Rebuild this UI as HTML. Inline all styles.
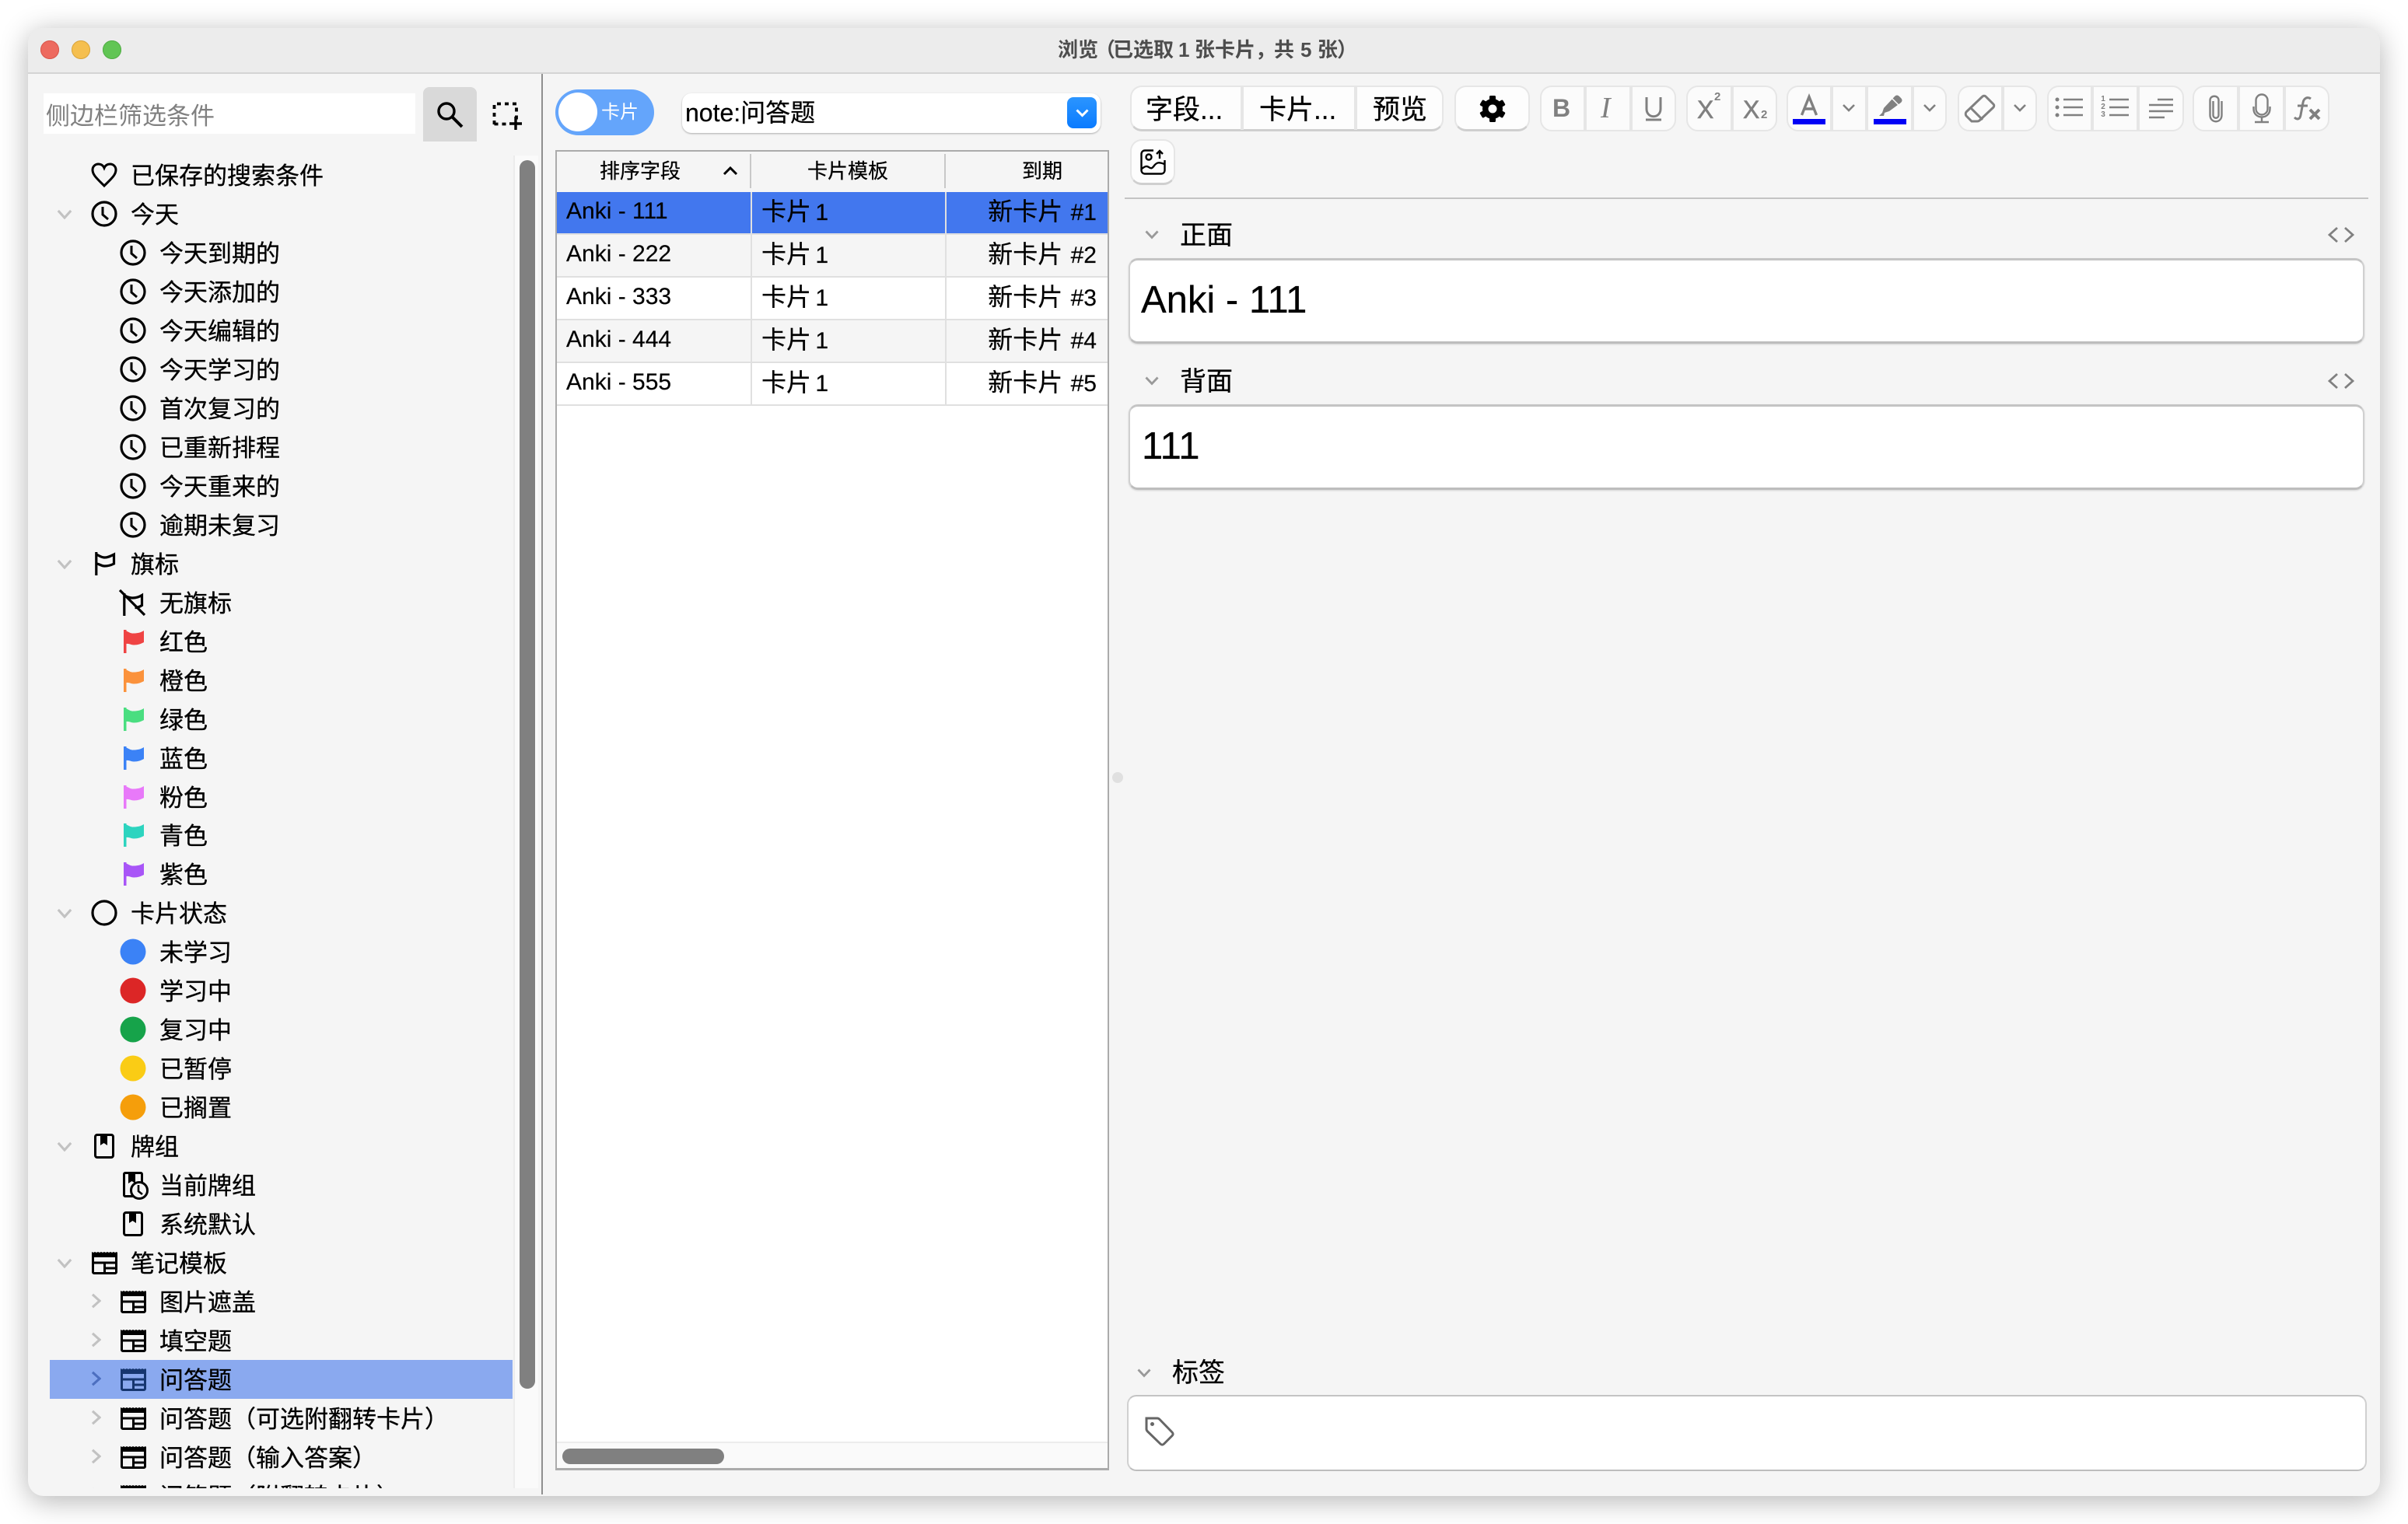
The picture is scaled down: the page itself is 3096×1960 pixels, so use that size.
<!DOCTYPE html>
<html lang="zh"><head><meta charset="utf-8"><title>浏览</title>
<style>
html,body{margin:0;padding:0;width:3096px;height:1960px;background:#fff;overflow:hidden}
body{position:relative;font-family:"Liberation Sans","Noto Sans CJK SC",sans-serif;color:#000}
.a{position:absolute;white-space:nowrap}
svg{position:absolute;overflow:visible}
#win{position:absolute;left:36px;top:36px;width:3024px;height:1888px;background:#f5f5f5;border-radius:20px;box-shadow:0 6px 36px rgba(0,0,0,.3)}
#tb{position:absolute;left:36px;top:36px;width:3024px;height:57px;background:#ececec;border-radius:20px 20px 0 0;border-bottom:2px solid #d4d4d4;box-sizing:content-box}
.tl{position:absolute;top:52px;width:24px;height:24px;border-radius:50%}
.tt{position:absolute;top:44px;line-height:40px;font-size:26px;font-weight:bold;color:#4d4d4d;white-space:nowrap}
#tree{position:absolute;left:0;top:0;width:660px;height:1914px;overflow:hidden}
.r{position:absolute;left:0;width:660px;height:50px;top:calc(200px + var(--i)*49.97px);line-height:50px;font-size:31px;-webkit-text-stroke:.3px #000}
.r span{position:absolute;white-space:nowrap;left:205px;top:2px}
.r.p span{left:168px}
.r svg{color:#000}
.sel{position:absolute;left:64px;top:1749px;width:595px;height:50px;background:#8aa9ef}
.cell{position:absolute;font-size:30px;line-height:54px;height:54px;white-space:nowrap;-webkit-text-stroke:.2px #000}
.cell span{font-size:32px}
.rowbg{position:absolute;left:716px;width:708px;height:53px}
.vl{position:absolute;width:2px;background:#e0e0e0}
.hl{position:absolute;left:716px;width:708px;height:2px;background:#e0e0e0}
.g{position:absolute;top:110px;height:59px;box-sizing:border-box;background:#fbfbfb;border:2px solid #e6e6e6;border-radius:15px}
.gw{background:#fdfdfd;border-bottom:3px solid #cfcfcf}
.d{position:absolute;top:112px;height:55px;width:4px;background:#e6e6e6}
.ic{stroke:#808080;fill:none}
.fl{position:absolute;background:#fff;box-sizing:border-box;border-radius:12px;border-top:3px solid #c4c4c4;border-left:2px solid #d0d0d0;border-right:2px solid #d0d0d0;border-bottom:3px solid #bdbdbd;box-shadow:0 1px 2px rgba(0,0,0,.15)}
.lb{-webkit-text-stroke:.25px #000}
</style></head><body>
<svg width="0" height="0" style="position:absolute">
<defs>
<symbol id="clk" viewBox="0 0 34 34"><circle cx="17" cy="17" r="15" fill="none" stroke="currentColor" stroke-width="3.200"/><path d="M15 8v10l7 6" fill="none" stroke="currentColor" stroke-width="3"/></symbol>
<symbol id="flg" viewBox="0 0 26 30"><path d="M0 0h3.500v1.500c3 1.500 6 3.500 9.500 3 5 0 9-1 13-3.500v15c-4 2-7 3.500-13 3.500-3.500 0-6-2-9.500-1.500V30H0Z" fill="currentColor"/></symbol>
<symbol id="dck" viewBox="0 0 26 32"><rect x="1.500" y="1.500" width="23" height="29" rx="2.500" fill="none" stroke="currentColor" stroke-width="3"/><path d="M8 2h9v13l-4.500-3L8 15Z" fill="currentColor"/></symbol>
<symbol id="nt" viewBox="0 0 33 30"><path d="M0 1l2 1 2-1 2 1 2-1 2 1 2-1 2 1 2-1 2 1 2-1 2 1 2-1 2 1 2-1 2 1 2-1 1 1v6H0Z" fill="currentColor"/><rect x="1.500" y="4" width="30" height="24.500" rx="1.500" fill="none" stroke="currentColor" stroke-width="3"/><path d="M1 15h31M16.500 15v14M16.500 22H32" fill="none" stroke="currentColor" stroke-width="3"/></symbol>
<symbol id="chd" viewBox="0 0 22 14"><path d="M2 2l9 10 9-10" fill="none" stroke="currentColor" stroke-width="3.400"/></symbol>
<symbol id="chr" viewBox="0 0 14 22"><path d="M2 2l10 9-10 9" fill="none" stroke="currentColor" stroke-width="3.400"/></symbol>
<symbol id="smc" viewBox="0 0 16 10"><path d="M1 1l7 7 7-7" fill="none" stroke="#808080" stroke-width="2.600"/></symbol>
</defs></svg>

<div id="win"></div>
<div id="tb"></div>
<div class="tl" style="left:52px;background:#ed6a5f;box-shadow:inset 0 0 0 1px #d8574c"></div>
<div class="tl" style="left:92px;background:#f5bf4f;box-shadow:inset 0 0 0 1px #d9a53d"></div>
<div class="tl" style="left:132px;background:#61c554;box-shadow:inset 0 0 0 1px #52ad46"></div>
<div class="tt" style="left:1360px">浏览</div><div class="tt" style="left:1408px">（</div><div class="tt" style="left:1431px">已选取</div><div class="tt" style="left:1515px">1</div><div class="tt" style="left:1536px">张卡片，</div><div class="tt" style="left:1638px">共</div><div class="tt" style="left:1672px">5</div><div class="tt" style="left:1694px">张</div><div class="tt" style="left:1719px">）</div>

<!-- sidebar top -->
<div class="a" style="left:56px;top:120px;width:478px;height:52px;background:#fff"></div>
<div class="a" style="left:59px;top:125px;line-height:50px;font-size:31px;color:#808080">侧边栏筛选条件</div>
<div class="a" style="left:544px;top:112px;width:69px;height:70px;background:#d9d9d9;border-radius:8px 8px 0 0"></div>
<svg style="left:560px;top:129px" width="36" height="36" viewBox="0 0 36 36"><circle cx="14" cy="14" r="10" fill="none" stroke="#000" stroke-width="3.400"/><path d="M21 21l13 13" stroke="#000" stroke-width="4"/></svg>
<svg style="left:634px;top:132px" width="38" height="36" viewBox="0 0 38 36"><path d="M1.500 28V1.500H30V22" fill="none" stroke="#000" stroke-width="3.800" stroke-dasharray="5 5"/><path d="M1.500 27.500H20" fill="none" stroke="#000" stroke-width="3.800" stroke-dasharray="5 5"/><path d="M29 18v17M21 27h16" stroke="#000" stroke-width="3.400"/></svg>
<div class="a" style="left:696px;top:95px;width:2px;height:1827px;background:#8f8f8f"></div>
<div class="a" style="left:660px;top:200px;width:32px;height:1714px;background:#fafafa;border-left:2px solid #ececec;box-sizing:border-box"></div>
<div class="a" style="left:668px;top:206px;width:20px;height:1580px;background:#808080;border-radius:10px"></div>

<div id="tree">
<div class="sel"></div>
<div class="r p" style="--i:0"><svg style="left:117px;top:9px" width="34" height="32" viewBox="0 0 34 32"><path d="M17 30C8 21 2 16 2 9.500 2 5 5.500 2 9.500 2c3 0 6 1.500 7.500 5 1.500-3.500 4.500-5 7.500-5C28.500 2 32 5 32 9.500 32 16 26 21 17 30Z" fill="none" stroke="#000" stroke-width="3"/></svg><span>已保存的搜索条件</span></div>
<div class="r p" style="--i:1"><svg style="left:73px;top:19px;color:#c2c2c2" width="20" height="13"><use href="#chd"/></svg><svg style="left:117px;top:8px" width="34" height="34"><use href="#clk"/></svg><span>今天</span></div>
<div class="r" style="--i:2"><svg style="left:154px;top:8px" width="34" height="34"><use href="#clk"/></svg><span>今天到期的</span></div>
<div class="r" style="--i:3"><svg style="left:154px;top:8px" width="34" height="34"><use href="#clk"/></svg><span>今天添加的</span></div>
<div class="r" style="--i:4"><svg style="left:154px;top:8px" width="34" height="34"><use href="#clk"/></svg><span>今天编辑的</span></div>
<div class="r" style="--i:5"><svg style="left:154px;top:8px" width="34" height="34"><use href="#clk"/></svg><span>今天学习的</span></div>
<div class="r" style="--i:6"><svg style="left:154px;top:8px" width="34" height="34"><use href="#clk"/></svg><span>首次复习的</span></div>
<div class="r" style="--i:7"><svg style="left:154px;top:8px" width="34" height="34"><use href="#clk"/></svg><span>已重新排程</span></div>
<div class="r" style="--i:8"><svg style="left:154px;top:8px" width="34" height="34"><use href="#clk"/></svg><span>今天重来的</span></div>
<div class="r" style="--i:9"><svg style="left:154px;top:8px" width="34" height="34"><use href="#clk"/></svg><span>逾期未复习</span></div>

<div class="r p" style="--i:10"><svg style="left:73px;top:19px;color:#c2c2c2" width="20" height="13"><use href="#chd"/></svg><svg style="left:122px;top:10px" width="26" height="30" viewBox="0 0 26 30"><path d="M1.800 0v30M1.800 3c3 1 6 4 10.700 4 4.500 0 8-2 12-4v12c-4 2-7 3-12 3-4.500 0-7-3-10.700-3" fill="none" stroke="#000" stroke-width="3.200"/></svg><span>旗标</span></div>
<div class="r" style="--i:11"><svg style="left:153px;top:8px" width="34" height="34" viewBox="0 0 34 34"><path d="M6.800 5v29M6.800 8c3 1 6 3 10.700 3 4 0 8-1 12-3.500v13c-3 2-6 3-9 3M1 1l32 32" fill="none" stroke="#000" stroke-width="3.200"/></svg><span>无旗标</span></div>
<div class="r" style="--i:12;color:#000"><svg style="left:159px;top:10px;color:#ef4444" width="26" height="30"><use href="#flg"/></svg><span>红色</span></div>
<div class="r" style="--i:13"><svg style="left:159px;top:10px;color:#fb923c" width="26" height="30"><use href="#flg"/></svg><span>橙色</span></div>
<div class="r" style="--i:14"><svg style="left:159px;top:10px;color:#4ade80" width="26" height="30"><use href="#flg"/></svg><span>绿色</span></div>
<div class="r" style="--i:15"><svg style="left:159px;top:10px;color:#3b82f6" width="26" height="30"><use href="#flg"/></svg><span>蓝色</span></div>
<div class="r" style="--i:16"><svg style="left:159px;top:10px;color:#e879f9" width="26" height="30"><use href="#flg"/></svg><span>粉色</span></div>
<div class="r" style="--i:17"><svg style="left:159px;top:10px;color:#2dd4bf" width="26" height="30"><use href="#flg"/></svg><span>青色</span></div>
<div class="r" style="--i:18"><svg style="left:159px;top:10px;color:#a855f7" width="26" height="30"><use href="#flg"/></svg><span>紫色</span></div>

<div class="r p" style="--i:19"><svg style="left:73px;top:19px;color:#c2c2c2" width="20" height="13"><use href="#chd"/></svg><svg style="left:117px;top:8px" width="34" height="34" viewBox="0 0 34 34"><circle cx="17" cy="17" r="15" fill="none" stroke="#000" stroke-width="3.200"/></svg><span>卡片状态</span></div>
<div class="r" style="--i:20"><svg style="left:154px;top:8px" width="34" height="34" viewBox="0 0 34 34"><circle cx="17" cy="17" r="16.500" fill="#3b82f6"/></svg><span>未学习</span></div>
<div class="r" style="--i:21"><svg style="left:154px;top:8px" width="34" height="34" viewBox="0 0 34 34"><circle cx="17" cy="17" r="16.500" fill="#dc2626"/></svg><span>学习中</span></div>
<div class="r" style="--i:22"><svg style="left:154px;top:8px" width="34" height="34" viewBox="0 0 34 34"><circle cx="17" cy="17" r="16.500" fill="#16a34a"/></svg><span>复习中</span></div>
<div class="r" style="--i:23"><svg style="left:154px;top:8px" width="34" height="34" viewBox="0 0 34 34"><circle cx="17" cy="17" r="16.500" fill="#facc15"/></svg><span>已暂停</span></div>
<div class="r" style="--i:24"><svg style="left:154px;top:8px" width="34" height="34" viewBox="0 0 34 34"><circle cx="17" cy="17" r="16.500" fill="#f59e0b"/></svg><span>已搁置</span></div>

<div class="r p" style="--i:25"><svg style="left:73px;top:19px;color:#c2c2c2" width="20" height="13"><use href="#chd"/></svg><svg style="left:121px;top:9px" width="26" height="32"><use href="#dck"/></svg><span>牌组</span></div>
<div class="r" style="--i:26"><svg style="left:158px;top:8px" width="33" height="36" viewBox="0 0 33 36"><path d="M13 31.500H3A1.500 1.500 0 0 1 1.500 30V3A1.500 1.500 0 0 1 3 1.500h20A1.500 1.500 0 0 1 24.500 3v13" fill="none" stroke="#000" stroke-width="3"/><path d="M7 2h9v13l-4.500-3L7 15Z" fill="#000"/><circle cx="21" cy="24" r="10.500" fill="#f5f5f5" stroke="#000" stroke-width="3"/><path d="M20 17v8l5 4" fill="none" stroke="#000" stroke-width="2.600"/></svg><span>当前牌组</span></div>
<div class="r" style="--i:27"><svg style="left:158px;top:9px" width="26" height="32"><use href="#dck"/></svg><span>系统默认</span></div>

<div class="r p" style="--i:28"><svg style="left:73px;top:19px;color:#c2c2c2" width="20" height="13"><use href="#chd"/></svg><svg style="left:118px;top:10px" width="33" height="30"><use href="#nt"/></svg><span>笔记模板</span></div>
<div class="r" style="--i:29"><svg style="left:117px;top:14px;color:#c2c2c2" width="13" height="20"><use href="#chr"/></svg><svg style="left:154.500px;top:10px" width="33" height="30"><use href="#nt"/></svg><span>图片遮盖</span></div>
<div class="r" style="--i:30"><svg style="left:117px;top:14px;color:#c2c2c2" width="13" height="20"><use href="#chr"/></svg><svg style="left:154.500px;top:10px" width="33" height="30"><use href="#nt"/></svg><span>填空题</span></div>
<div class="r" style="--i:31"><svg style="left:117px;top:14px;color:#4d6fc0" width="13" height="20"><use href="#chr"/></svg><svg style="left:154.500px;top:10px;color:#16366f" width="33" height="30"><use href="#nt"/></svg><span>问答题</span></div>
<div class="r" style="--i:32"><svg style="left:117px;top:14px;color:#c2c2c2" width="13" height="20"><use href="#chr"/></svg><svg style="left:154.500px;top:10px" width="33" height="30"><use href="#nt"/></svg><span>问答题（可选附翻转卡片）</span></div>
<div class="r" style="--i:33"><svg style="left:117px;top:14px;color:#c2c2c2" width="13" height="20"><use href="#chr"/></svg><svg style="left:154.500px;top:10px" width="33" height="30"><use href="#nt"/></svg><span>问答题（输入答案）</span></div>
<div class="r" style="--i:34"><svg style="left:117px;top:14px;color:#c2c2c2" width="13" height="20"><use href="#chr"/></svg><svg style="left:154.500px;top:10px" width="33" height="30"><use href="#nt"/></svg><span>问答题（附翻转卡片）</span></div>
</div>

<!-- middle top -->
<div class="a" style="left:714px;top:115px;width:127px;height:59px;background:#64a5fb;border-radius:30px"></div>
<div class="a" style="left:718px;top:119px;width:50px;height:50px;background:#fff;border-radius:50%"></div>
<div class="a" style="left:773px;top:125px;line-height:40px;font-size:24px;color:#fff">卡片</div>
<div class="a" style="left:877px;top:120px;width:538px;height:51px;background:#fff;border-radius:12px;box-shadow:0 1px 2px rgba(0,0,0,.3)"></div>
<div class="a lb" style="left:881px;top:120px;line-height:50px;font-size:32px">note:问答题</div>
<div class="a" style="left:1372px;top:125px;width:38px;height:40px;border-radius:8px;background:linear-gradient(#2b95ff,#0a7bff)"></div>
<svg style="left:1383px;top:140px" width="17" height="11" viewBox="0 0 17 11"><path d="M1.500 1.500l7 7 7-7" fill="none" stroke="#fff" stroke-width="3"/></svg>

<!-- table -->
<div class="a" style="left:714px;top:193px;width:712px;height:1698px;background:#fff;border:2px solid #ababab;border-bottom-width:3px;box-sizing:border-box"></div>
<div class="a" style="left:716px;top:195px;width:708px;height:52px;background:#f5f5f5"></div>
<div class="vl" style="left:964px;top:198px;height:44px;background:#c8c8c8"></div>
<div class="vl" style="left:1214px;top:198px;height:44px;background:#c8c8c8"></div>
<div class="a lb" style="left:771px;top:200px;width:104px;line-height:40px;font-size:26px;text-align:center">排序字段</div>
<svg style="left:929px;top:214px" width="20" height="12" viewBox="0 0 20 12"><path d="M2 10l8-8 8 8" fill="none" stroke="#000" stroke-width="3"/></svg>
<div class="a lb" style="left:1038px;top:200px;width:104px;line-height:40px;font-size:26px;text-align:center">卡片模板</div>
<div class="a lb" style="left:1288px;top:200px;width:104px;line-height:40px;font-size:26px;text-align:center">到期</div>

<div class="rowbg" style="top:247px;background:#4277ee"></div>
<div class="rowbg" style="top:302px;background:#f5f5f5"></div>
<div class="rowbg" style="top:412px;background:#f5f5f5"></div>
<div class="hl" style="top:300px"></div><div class="hl" style="top:355px"></div><div class="hl" style="top:410px"></div><div class="hl" style="top:465px"></div><div class="hl" style="top:520px"></div>
<div class="vl" style="left:965px;top:247px;height:275px"></div>
<div class="vl" style="left:1215px;top:247px;height:275px"></div>

<div class="cell" style="left:728px;top:245px">Anki - 111</div><div class="cell" style="left:979px;top:245px;word-spacing:-3px"><span>卡片</span> 1</div><div class="cell" style="right:1686px;top:245px;word-spacing:2px"><span>新卡片</span> #1</div>
<div class="cell" style="left:728px;top:300px">Anki - 222</div><div class="cell" style="left:979px;top:300px;word-spacing:-3px"><span>卡片</span> 1</div><div class="cell" style="right:1686px;top:300px;word-spacing:2px"><span>新卡片</span> #2</div>
<div class="cell" style="left:728px;top:355px">Anki - 333</div><div class="cell" style="left:979px;top:355px;word-spacing:-3px"><span>卡片</span> 1</div><div class="cell" style="right:1686px;top:355px;word-spacing:2px"><span>新卡片</span> #3</div>
<div class="cell" style="left:728px;top:410px">Anki - 444</div><div class="cell" style="left:979px;top:410px;word-spacing:-3px"><span>卡片</span> 1</div><div class="cell" style="right:1686px;top:410px;word-spacing:2px"><span>新卡片</span> #4</div>
<div class="cell" style="left:728px;top:465px">Anki - 555</div><div class="cell" style="left:979px;top:465px;word-spacing:-3px"><span>卡片</span> 1</div><div class="cell" style="right:1686px;top:465px;word-spacing:2px"><span>新卡片</span> #5</div>

<div class="a" style="left:716px;top:1854px;width:708px;height:34px;background:#fafafa;border-top:2px solid #ececec;box-sizing:border-box"></div>
<div class="a" style="left:723px;top:1863px;width:208px;height:20px;background:#808080;border-radius:10px"></div>
<div class="a" style="left:1430px;top:993px;width:14px;height:14px;background:#e0e0e0;border-radius:50%"></div>

<!-- toolbar row 1 -->
<div class="g gw" style="left:1453px;width:403px"></div>
<div class="d" style="left:1595px"></div><div class="d" style="left:1741px"></div>
<div class="a lb" style="left:1473px;top:122px;line-height:40px;font-size:35px">字段...</div>
<div class="a lb" style="left:1619px;top:122px;line-height:40px;font-size:35px">卡片...</div>
<div class="a lb" style="left:1765px;top:122px;line-height:40px;font-size:35px">预览</div>
<div class="g gw" style="left:1870px;width:97px"></div>
<svg style="left:1901px;top:122px" width="36" height="36" viewBox="0 0 36 36"><g fill="#000"><rect x="14" y="1" width="8" height="34" rx="1.500"/><rect x="14" y="1" width="8" height="34" rx="1.500" transform="rotate(60 18 18)"/><rect x="14" y="1" width="8" height="34" rx="1.500" transform="rotate(120 18 18)"/><circle cx="18" cy="18" r="13"/></g><circle cx="18" cy="18" r="5.500" fill="#fdfdfd"/></svg>

<div class="g" style="left:1980px;width:175px"></div><div class="d" style="left:2036px"></div><div class="d" style="left:2095px"></div>
<div class="a" style="left:1996px;top:119px;line-height:40px;font-size:32px;font-weight:bold;color:#808080">B</div>
<div class="a" style="left:2058px;top:119px;line-height:40px;font-size:38px;font-style:italic;font-family:'Liberation Serif',serif;color:#808080">I</div>
<svg style="left:2114px;top:124px" width="24" height="32" viewBox="0 0 24 32"><path d="M3 1v15c0 13 18 13 18 0V1" class="ic" stroke-width="3"/><path d="M2 30h20" class="ic" stroke-width="3"/></svg>

<div class="g" style="left:2168px;width:117px"></div><div class="d" style="left:2225px"></div>
<div class="a" style="left:2182px;top:121px;line-height:40px;font-size:32px;color:#808080;-webkit-text-stroke:.6px #808080">X</div>
<div class="a" style="left:2204px;top:113px;line-height:24px;font-size:15px;font-weight:bold;color:#808080">2</div>
<div class="a" style="left:2241px;top:121px;line-height:40px;font-size:32px;color:#808080;-webkit-text-stroke:.6px #808080">X</div>
<div class="a" style="left:2264px;top:136px;line-height:24px;font-size:15px;font-weight:bold;color:#808080">2</div>

<div class="g" style="left:2297px;width:206px"></div><div class="d" style="left:2353px"></div><div class="d" style="left:2398px"></div><div class="d" style="left:2457px"></div>
<svg style="left:2315px;top:123px" width="22" height="25" viewBox="0 0 22 25"><path d="M1.500 25L11 1.500 20.500 25M5 17h12" class="ic" stroke-width="3.400"/></svg>
<div class="a" style="left:2305px;top:153px;width:42px;height:7px;background:#0000f5"></div>
<svg style="left:2369px;top:134px" width="16" height="10"><use href="#smc"/></svg>
<svg style="left:2416px;top:122px" width="30" height="28" viewBox="0 0 30 28"><path d="M0 27l4-4 2-6L20 2c2-2 4-2 6 0l2 2c2 2 2 4 0 6L13 21l-6 2-1 4Z" fill="#808080"/><path d="M17 5l8 8" stroke="#fbfbfb" stroke-width="1.500"/></svg>
<div class="a" style="left:2409px;top:153px;width:42px;height:7px;background:#0000f5"></div>
<svg style="left:2473px;top:134px" width="16" height="10"><use href="#smc"/></svg>

<div class="g" style="left:2517px;width:102px"></div><div class="d" style="left:2573px"></div>
<svg style="left:2526px;top:122px" width="40" height="36" viewBox="0 0 40 36"><path d="M2 22L23 2c1-1 3-1 4 0l10 10c1 1 1 3 0 4L19 33c-1 1-2 1-3 1H9L2 27c-1-1-1-4 0-5ZM8 17l15 15" class="ic" stroke-width="3"/></svg>
<svg style="left:2589px;top:134px" width="16" height="10"><use href="#smc"/></svg>

<div class="g" style="left:2632px;width:176px"></div><div class="d" style="left:2688px"></div><div class="d" style="left:2747px"></div>
<svg style="left:2640px;top:122px" width="40" height="32" viewBox="0 0 40 32"><g fill="#808080"><circle cx="5" cy="6" r="2.500"/><circle cx="5" cy="16" r="2.500"/><circle cx="5" cy="26" r="2.500"/></g><path d="M13 6h25M13 16h25M13 26h25" stroke="#808080" stroke-width="2.400"/></svg>
<svg style="left:2712px;top:122px" width="26" height="32" viewBox="0 0 26 32"><path d="M0 6h25M0 16h25M0 26h25" stroke="#808080" stroke-width="2.400"/></svg>
<div class="a" style="left:2700px;top:123px;line-height:10px;font-size:10px;font-weight:bold;color:#808080;white-space:normal;width:8px;text-align:center"><div style="height:10px">1</div><div style="height:10px">2</div><div style="height:10px">3</div></div>
<svg style="left:2763px;top:126px" width="32" height="28" viewBox="0 0 32 28"><path d="M11 2h20M0 9h31M0 17h31M0 25h20" stroke="#808080" stroke-width="2.400"/></svg>

<div class="g" style="left:2819px;width:176px"></div><div class="d" style="left:2876px"></div><div class="d" style="left:2935px"></div>
<svg style="left:2840px;top:122px" width="18" height="36" viewBox="0 0 18 36"><path d="M5.500 8v18c0 5 7 5 7 0V7c0-7-11-7-11 0v19c0 11 15 11 15 0V8" class="ic" stroke-width="2.400"/></svg>
<svg style="left:2896px;top:120px" width="24" height="38" viewBox="0 0 24 38"><rect x="4.500" y="1.500" width="15" height="26" rx="7.500" class="ic" stroke-width="2.400"/><path d="M1.500 17v3c0 14 21 14 21 0v-3M12 31v6M3 37h18" class="ic" stroke-width="2.400"/></svg>
<svg style="left:2950px;top:124px" width="34" height="32" viewBox="0 0 34 32"><path d="M21 3c-4-3-9-1-10 5L8 24c-1 6-5 6-8 3M4 12h13" class="ic" stroke-width="3"/><path d="M20 17l12 12M32 17L20 29" class="ic" stroke-width="4"/></svg>

<!-- row 2 -->
<div class="g gw" style="left:1453px;top:179px;width:58px"></div>
<svg style="left:1466px;top:192px" width="33" height="33" viewBox="0 0 33 33"><path d="M17 1.500H6A4.500 4.500 0 0 0 1.500 6v21A4.500 4.500 0 0 0 6 31.500h21a4.500 4.500 0 0 0 4.500-4.500V14" fill="none" stroke="#000" stroke-width="2.400"/><circle cx="11" cy="10" r="3.500" fill="none" stroke="#000" stroke-width="2.400"/><path d="M2 25c4-3 6-4 9-2 3 2 4 2 7-2 3-4 6-5 13-2M25 12V2M21 6l4-4 4 4" fill="none" stroke="#000" stroke-width="2.400"/></svg>

<div class="a" style="left:1446px;top:254px;width:1599px;height:2px;background:#c4c4c4"></div>

<!-- fields -->
<svg style="left:1472px;top:296px" width="18" height="12" viewBox="0 0 18 12"><path d="M1.500 1.500l7.500 8 7.500-8" fill="none" stroke="#999" stroke-width="2.800"/></svg>
<div class="a lb" style="left:1517px;top:283px;line-height:40px;font-size:34px">正面</div>
<svg style="left:2993px;top:292px" width="34" height="20" viewBox="0 0 34 20"><path d="M12 1L2 10l10 9M22 1l10 9-10 9" fill="none" stroke="#808080" stroke-width="2.800"/></svg>
<div class="fl" style="left:1451px;top:332px;width:1589px;height:110px"></div>
<div class="a lb" style="left:1467px;top:356px;line-height:60px;font-size:49px">Anki - 111</div>

<svg style="left:1472px;top:484px" width="18" height="12" viewBox="0 0 18 12"><path d="M1.500 1.500l7.500 8 7.500-8" fill="none" stroke="#999" stroke-width="2.800"/></svg>
<div class="a lb" style="left:1517px;top:471px;line-height:40px;font-size:34px">背面</div>
<svg style="left:2993px;top:480px" width="34" height="20" viewBox="0 0 34 20"><path d="M12 1L2 10l10 9M22 1l10 9-10 9" fill="none" stroke="#808080" stroke-width="2.800"/></svg>
<div class="fl" style="left:1451px;top:520px;width:1589px;height:110px"></div>
<div class="a lb" style="left:1468px;top:544px;line-height:60px;font-size:49px">111</div>

<svg style="left:1462px;top:1760px" width="18" height="12" viewBox="0 0 18 12"><path d="M1.500 1.500l7.500 8 7.500-8" fill="none" stroke="#999" stroke-width="2.800"/></svg>
<div class="a lb" style="left:1507px;top:1746px;line-height:40px;font-size:34px">标签</div>
<div class="fl" style="left:1449px;top:1794px;width:1594px;height:98px;border-top-width:2px;border-bottom-width:2px;box-shadow:none"></div>
<svg style="left:1472px;top:1822px" width="38" height="38" viewBox="0 0 38 38"><path d="M2 2h14c1 0 2 .5 3 1.500L35 20c1.500 1.500 1.500 3 0 4.500L24.500 35c-1.500 1.500-3 1.500-4.500 0L3.500 19C2.500 18 2 17 2 16Z" fill="none" stroke="#666" stroke-width="3"/><circle cx="9.500" cy="9.500" r="2.500" fill="#666"/></svg>
</body></html>
